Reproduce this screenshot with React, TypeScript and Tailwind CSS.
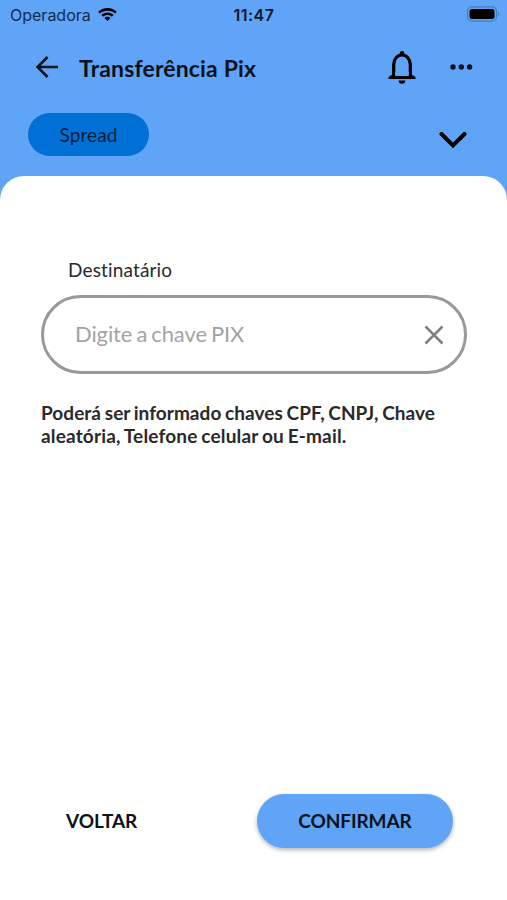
export default function App() {
  return (
    <div className="flex h-[900px] w-[507px] flex-col overflow-hidden bg-[#60a4f8] font-['Lato',sans-serif] text-[#0b121c] [font-variant-ligatures:none]">
      <div className="grid h-[30px] grid-cols-3 items-center pl-[9px] pr-[8px] font-['Inter',sans-serif] text-[#142c4b]">
        <div className="flex items-center gap-[7px] pl-px text-[16px]">
          <span>Operadora</span>
          <svg className="mb-px text-black" width="19" height="14" viewBox="0 0 20 15" fill="currentColor">
            <path d="M10 0C6 0 2.600 1.500 0 4l1.800 1.900C4 3.800 6.800 2.900 10 2.900s6 .9 8.200 3L20 4C17.400 1.500 14 0 10 0Z" />
            <path d="M10 4.700c-2.600 0-4.900 1-6.600 2.600l1.900 2C6.600 8.200 8.200 7.600 10 7.600s3.400.6 4.700 1.700l1.900-2C14.900 5.700 12.600 4.700 10 4.700Z" />
            <path d="M10 9.300c-1.300 0-2.400.5-3.200 1.300L10 14l3.200-3.400c-.8-.8-1.900-1.300-3.200-1.300Z" />
          </svg>
        </div>
        <span className="text-center text-[16px] font-semibold tracking-[0.45px] text-[#0c1929]">11:47</span>
        <svg className="mb-[2px] justify-self-end" width="33" height="16" viewBox="0 0 33 16">
          <rect x="1.500" y=".8" width="29" height="14.400" rx="4.500" fill="none" stroke="#447bbd" strokeWidth="1.200" />
          <rect x="3.500" y="3" width="25" height="10" rx="2.500" fill="#000" />
          <path d="M32 6c1.300.5 1.300 3.500 0 4Z" fill="#447bbd" />
        </svg>
      </div>
      <header className="flex h-[76px] items-center pb-[2px] pl-[36px] pr-[34px]">
        <svg width="22" height="22" viewBox="0 0 22 22" fill="none" stroke="currentColor" strokeWidth="2.600"><path d="M22 11H2M11.500 1 1.500 11l10 10" /></svg>
        <h1 className="ml-[21px] mt-[3px] text-[23px] font-bold tracking-[0.15px]">Transferência Pix</h1>
        <svg className="ml-auto" width="28" height="34" viewBox="0 0 28 34">
          <path d="M5.700 26V14.500a8.300 9.500 0 0 1 16.600 0V26" fill="none" stroke="#000" strokeWidth="3.200" />
          <path d="M11.700 6V3.300a2.300 2.300 0 0 1 4.600 0V6ZM4.500 24.500h19l4 2.600V29H.5v-1.900ZM10.700 30.500h6.600a3.300 3.300 0 0 1-6.600 0Z" fill="#000" />
          <path d="M7.200 22h13.600v4H7.200Z" fill="#60a4f8" />
        </svg>
        <svg className="ml-[34px]" width="23" height="6" viewBox="0 0 23 6" fill="currentColor"><circle cx="3" cy="3" r="2.700" /><circle cx="11.300" cy="3" r="2.700" /><circle cx="19.600" cy="3" r="2.700" /></svg>
      </header>
      <div className="flex h-[70px] items-start justify-between pl-[28px] pr-[40px] pt-[7px]">
        <button className="h-[43px] w-[121px] rounded-full bg-[#0070d6] pt-[2px] text-[19px] tracking-[0.1px] text-[#061d3b]">Spread</button>
        <svg className="mt-[19px]" width="28" height="17" viewBox="0 0 28 17" fill="none" stroke="#000" strokeWidth="4"><path d="m2.500 2 11.500 11.500L25.500 2" strokeLinecap="round" /></svg>
      </div>
      <main className="flex flex-1 flex-col rounded-t-[24px] bg-white px-[41px] pt-[81px]">
        <label className="ml-[27px] h-[38px] text-[19px] leading-[25px] tracking-[0.15px] text-[#29292b]">Destinatário</label>
        <div className="flex h-[79px] w-[426px] items-center justify-between rounded-full border-[3px] border-[#999] pl-[31px] pr-[20px]">
          <span className="mb-[2px] text-[22px] tracking-[-0.1px] text-[#a3a3a3] [word-spacing:-1.500px]">Digite a chave PIX</span>
          <svg width="20" height="20" viewBox="0 0 20 20" stroke="#808080" strokeWidth="2.500"><path d="m1.500 1.500 17 17M18.500 1.500l-17 17" /></svg>
        </div>
        <p className="mt-[27px] whitespace-nowrap text-[19px] font-bold leading-[23px] text-[#29292b] [word-spacing:-1px]">
          <span className="block tracking-[0.05px]">Poderá ser informado chaves CPF, CNPJ, Chave</span>
          <span className="block tracking-[0.17px]">aleatória, Telefone celular ou E-mail.</span>
        </p>
        <div className="mb-[52px] mt-auto flex items-center justify-between pl-[25px] pr-[13px] text-[19px] font-bold tracking-[-0.1px]">
          <button>VOLTAR</button>
          <button className="h-[54px] w-[196px] rounded-full bg-[#60a4f8] shadow-[0_2px_4px_#0000004d]">CONFIRMAR</button>
        </div>
      </main>
    </div>
  );
}
